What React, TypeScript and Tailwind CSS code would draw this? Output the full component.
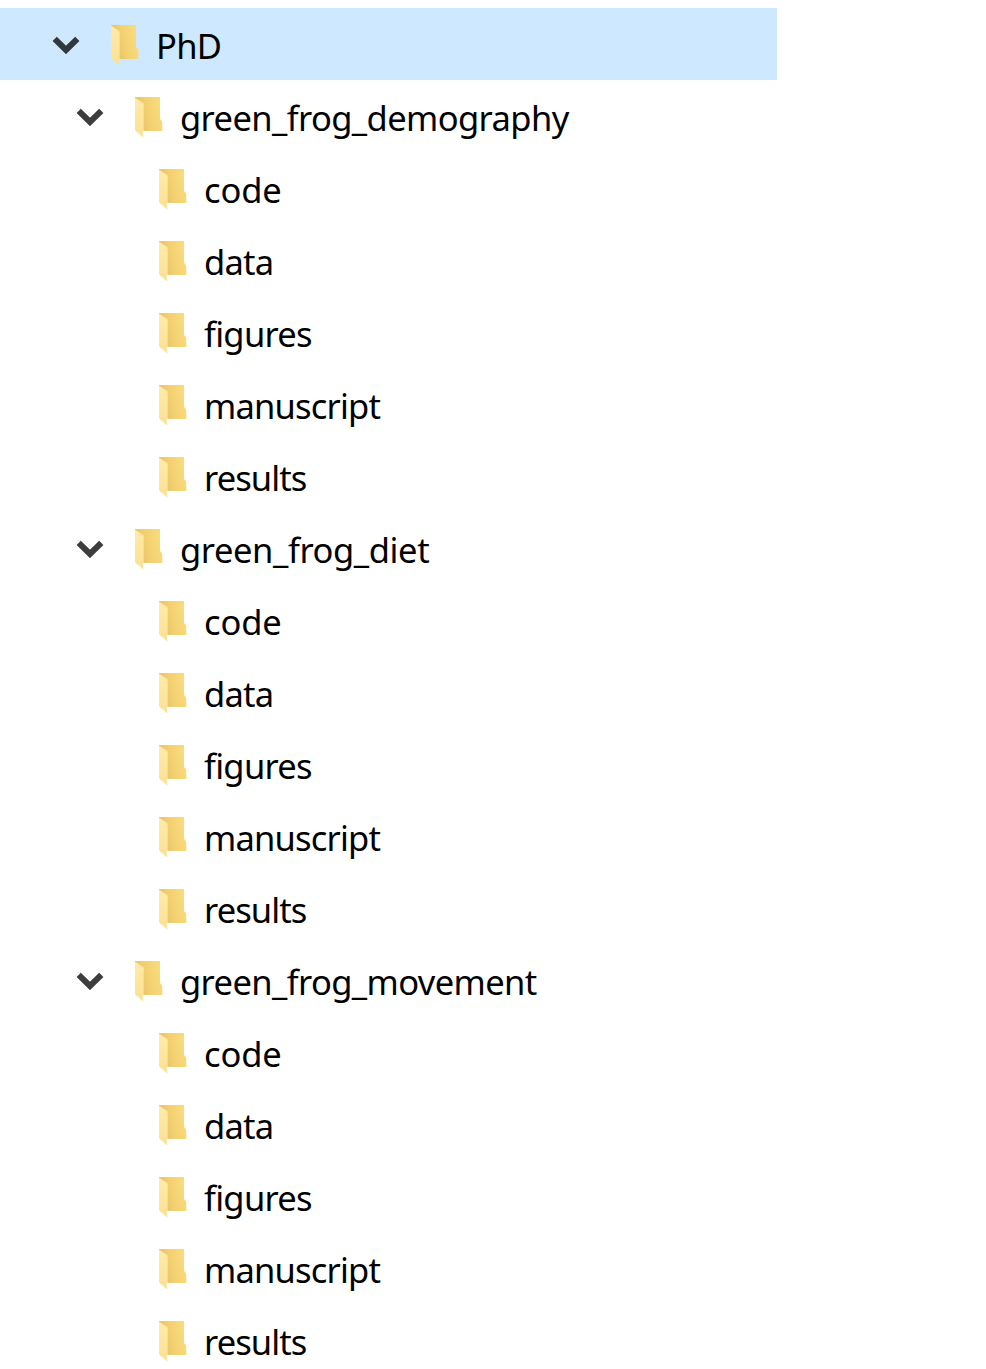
interface Folder {
  name: string;
  tracking: string;
  children?: Folder[];
}

const subfolders: Folder[] = [
  { name: 'code', tracking: 'tracking-[-0.1px]' },
  { name: 'data', tracking: 'tracking-[-0.8px]' },
  { name: 'figures', tracking: 'tracking-[-0.7px]' },
  { name: 'manuscript', tracking: 'tracking-[-0.8px]' },
  { name: 'results', tracking: 'tracking-[-0.9px]' },
];

const root: Folder = {
  name: 'PhD',
  tracking: 'tracking-[-0.7px]',
  children: [
    { name: 'green_frog_demography', tracking: 'tracking-[-0.6px]', children: subfolders },
    { name: 'green_frog_diet', tracking: 'tracking-[-0.4px]', children: subfolders },
    { name: 'green_frog_movement', tracking: 'tracking-[-0.6px]', children: subfolders },
  ],
};

const indents = ['pl-[52px]', 'pl-[76px]', 'pl-[100px]'];

function Chevron() {
  return (
    <svg width="28" height="18" viewBox="0 0 28 18" className="block">
      <path d="M2.7 2.8 14 14 25.3 2.8" fill="none" stroke="#000" strokeOpacity="0.76" strokeWidth="6" />
    </svg>
  );
}

function FolderIcon() {
  return (
    <svg width="29" height="42" viewBox="0 0 29 42" className="mt-[17px] shrink-0">
      <path d="M0 0H25V21.5L27.3 25V34H6L0 5Z" fill="url(#back)" />
      <path d="M0 0.5 8.7 6.5V34L7.6 34.5 8.7 40.5 0 33.5Z" fill="url(#flap)" />
    </svg>
  );
}

function FolderRow({ folder, depth }: { folder: Folder; depth: number }) {
  return (
    <>
      <div className={`flex h-[72px] w-[777px] items-start ${indents[depth]} ${depth === 0 ? 'bg-[#cde8ff]' : ''}`}>
        <div className="mt-[28px] h-[18px] w-[28px] shrink-0">{folder.children && <Chevron />}</div>
        <div className="w-[31px] shrink-0" />
        <FolderIcon />
        <span className={`ml-[16px] whitespace-nowrap text-[34.5px] leading-[75px] text-black ${folder.tracking}`}>
          {folder.name}
        </span>
      </div>
      {folder.children?.map(child => (
        <FolderRow key={child.name} folder={child} depth={depth + 1} />
      ))}
    </>
  );
}

export default function App() {
  return (
    <div className="h-[1369px] w-[986px] overflow-hidden bg-white pt-[8px] font-['Noto_Sans','Open_Sans',sans-serif]">
      <svg width="0" height="0" className="absolute">
        <defs>
          <linearGradient id="back" x1="0" y1="0.35" x2="1" y2="0.1">
            <stop offset="0" stopColor="#e4c068" />
            <stop offset="0.4" stopColor="#f2d070" />
            <stop offset="1" stopColor="#fade80" />
          </linearGradient>
          <linearGradient id="flap" x1="0" y1="0" x2="0" y2="1">
            <stop offset="0" stopColor="#ffeaa8" />
            <stop offset="1" stopColor="#fbe194" />
          </linearGradient>
        </defs>
      </svg>
      <FolderRow folder={root} depth={0} />
    </div>
  );
}
